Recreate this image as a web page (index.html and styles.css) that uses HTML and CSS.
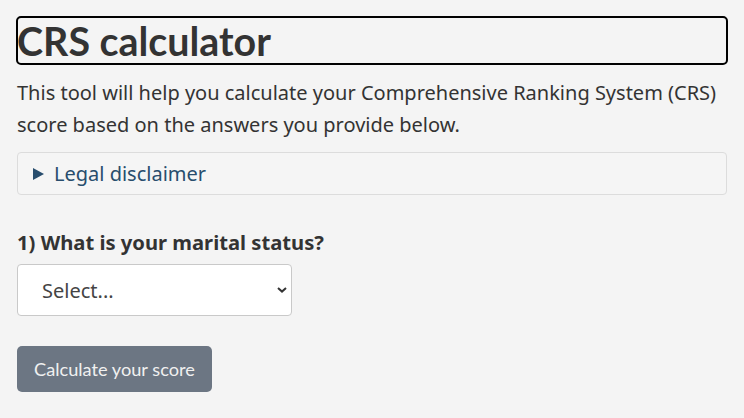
FILE: index.html
```html
<!DOCTYPE html>
<html lang="en">
<head>
<meta charset="utf-8">
<title>CRS calculator</title>
<link rel="stylesheet" href="styles.css">
</head>
<body>
<main class="page">
  <h1 class="title">CRS calculator</h1>
  <p class="intro">This tool will help you calculate your Comprehensive Ranking System (CRS) score based on the answers you provide below.</p>
  <details class="disclaimer">
    <summary class="disclaimer-summary">Legal disclaimer</summary>
  </details>
  <div class="question">
    <label class="question-label" for="marital">1) What is your marital status?</label>
    <div class="select-wrap">
      <select id="marital" class="select">
        <option>Select...</option>
      </select>
      <svg class="chevron" viewBox="0 0 10 6" width="10" height="6" aria-hidden="true"><path d="M1 1 L5 4.6 L9 1" fill="none" stroke="#333" stroke-width="2"/></svg>
    </div>
  </div>
  <button class="calc-btn" type="button">Calculate your score</button>
</main>
</body>
</html>
```
FILE: styles.css
```css
html, body {
  margin: 0;
  padding: 0;
  background: #f4f4f4;
}
body {
  font-family: "Noto Sans", "Open Sans", sans-serif;
  color: #333;
}
.page {
  padding: 18px 17px 0 17px;
  display: flex;
  flex-direction: column;
  align-items: flex-start;
}
.title {
  align-self: stretch;
  margin: 0 1px;
  font-family: Lato, sans-serif;
  font-weight: 700;
  font-size: 39.4px;
  line-height: 45px;
  color: #333;
  text-indent: -1px;
  outline: 2px solid #000;
  outline-offset: 0;
  border-radius: 3px;
}
.intro {
  margin: 14px 0 0 0;
  font-size: 20px;
  line-height: 32px;
  color: #333;
}
.disclaimer {
  align-self: stretch;
  margin-top: 11px;
  border: 1px solid #dcdcdc;
  border-radius: 4px;
  background: #f5f5f5;
}
.disclaimer-summary {
  list-style: none;
  display: flex;
  align-items: center;
  gap: 10px;
  height: 41px;
  padding: 0 0 0 15px;
  font-size: 20px;
  color: #284d6d;
  cursor: pointer;
}
.disclaimer-summary::-webkit-details-marker { display: none; }
.disclaimer-summary::before {
  content: "";
  width: 0;
  height: 0;
  border-top: 6px solid transparent;
  border-bottom: 6px solid transparent;
  border-left: 11px solid #284d6d;
}
.question {
  margin-top: 33px;
  display: flex;
  flex-direction: column;
  gap: 8px;
}
.question-label {
  font-weight: 700;
  font-size: 20.2px;
  line-height: 28px;
  color: #333;
}
.select-wrap {
  position: relative;
  width: 275px;
}
.select {
  appearance: none;
  -webkit-appearance: none;
  width: 275px;
  height: 52px;
  padding: 0 0 0 24px;
  border: 1px solid #c9c9c9;
  border-radius: 4px;
  background: #fff;
  font-family: "Noto Sans", "Open Sans", sans-serif;
  font-size: 20px;
  color: #444;
}
.chevron {
  position: absolute;
  right: 5px;
  top: 23px;
  pointer-events: none;
}
.calc-btn {
  margin-top: 30px;
  height: 46px;
  padding: 0 17px;
  border: 0;
  border-radius: 5px;
  background: #6c7683;
  color: #f0f0f0;
  font-family: Lato, sans-serif;
  font-size: 18.2px;
  cursor: pointer;
}
```
